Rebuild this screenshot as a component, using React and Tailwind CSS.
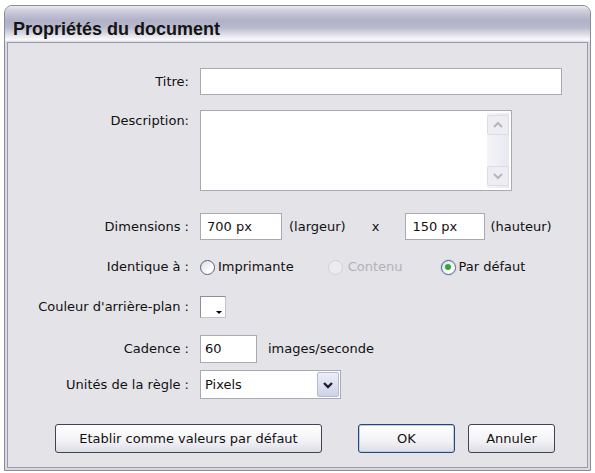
import React from 'react'

function Radio({ checked, disabled }) {
    return (
        <span
            className={`relative flex h-[15px] w-[15px] items-center justify-center rounded-full border ${disabled ? 'border-[#cfcfd6] bg-[#ececf0]' : 'border-[#55627e] bg-[linear-gradient(135deg,#d8d8e2,#ffffff_70%)]'} ${checked ? 'shadow-[0_0_0_1px_#c6d6f0]' : ''}`}
        >
            {checked && <span className="h-[6px] w-[6px] rounded-full bg-[#2fa83a]" />}
        </span>
    )
}

function Chevron({ up, color, w = 2 }) {
    return (
        <svg width="10" height="8" viewBox="0 0 10 8">
            <path d={up ? 'M1 6 L5 2 L9 6' : 'M1 2 L5 6 L9 2'} fill="none" stroke={color} strokeWidth={w} />
        </svg>
    )
}

function Label({ children, top }) {
    return (
        <div className={`w-[182px] shrink-0 pr-[1px] text-right ${top ? 'self-start pt-[1px]' : ''}`}>{children}</div>
    )
}

export default function App() {
    return (
        <div className="h-[473px] w-[595px] overflow-hidden bg-white pl-[4px] pt-[5px] font-['DejaVu_Sans',sans-serif] text-[13px] text-[#111]">
            <div className="flex h-[466px] w-[587px] flex-col overflow-hidden rounded-t-[8px] border border-[#8a8a9a] bg-[#d9d9e1]">
                {/* title bar */}
                <div className="h-[36px] shrink-0 bg-[linear-gradient(to_bottom,#ececf2_0%,#d0d0dc_12%,#b0b0c8_40%,#babacd_60%,#e4e4ec_82%,#fafafc_94%,#d8d8e2_100%)] pl-[8px] pt-[12px]">
                    <div className="font-['Liberation_Sans',Arial,sans-serif] text-[18px] font-bold leading-[22px] text-[#141414]">
                        Propriétés du document
                    </div>
                </div>

                <div className="flex-1 px-[2px] pb-[2px]">
                    <div className="flex h-full flex-col border border-[#9a9aac] bg-[#e3e3e8]">
                        {/* Titre */}
                        <div className="mt-[25px] flex h-[27px] items-center gap-[10px]">
                            <Label>Titre:</Label>
                            <div className="h-[27px] w-[362px] border border-[#a9a9b6] bg-white" />
                        </div>

                        {/* Description */}
                        <div className="mt-[15px] flex h-[81px] gap-[10px]">
                            <Label top>Description:</Label>
                            <div className="flex h-[81px] w-[312px] justify-end border border-[#a9a9b6] bg-white p-[2px]">
                                <div className="flex w-[22px] flex-col justify-between bg-[linear-gradient(to_right,#f4f4f8,#e8e8f0)] py-[2px]">
                                    <div className="flex h-[20px] items-center justify-center rounded-[2px] border border-[#dcdce4] bg-[#eeeef2]">
                                        <Chevron up color="#b4b4c2" />
                                    </div>
                                    <div className="flex h-[20px] items-center justify-center rounded-[2px] border border-[#dcdce4] bg-[#eeeef2]">
                                        <Chevron color="#b4b4c2" />
                                    </div>
                                </div>
                            </div>
                        </div>

                        {/* Dimensions */}
                        <div className="mt-[22px] flex h-[27px] items-center gap-[10px]">
                            <Label>Dimensions :</Label>
                            <div className="flex items-center">
                                <div className="flex h-[27px] w-[82px] items-center border border-[#a9a9b6] bg-white pl-[6px]">700 px</div>
                                <span className="ml-[7px]">(largeur)</span>
                                <span className="ml-[26px]">x</span>
                                <div className="ml-[26px] flex h-[27px] w-[80px] items-center border border-[#a9a9b6] bg-white pl-[6px]">150 px</div>
                                <span className="ml-[5px]">(hauteur)</span>
                            </div>
                        </div>

                        {/* Identique a */}
                        <div className="mt-[17px] flex h-[20px] items-center gap-[10px]">
                            <Label>Identique à :</Label>
                            <div className="flex items-center">
                                <Radio />
                                <span className="ml-[3px]">Imprimante</span>
                                <span className="ml-[34px]"><Radio disabled /></span>
                                <span className="ml-[5px] text-[#b2b2b8]">Contenu</span>
                                <span className="ml-[38px]"><Radio checked /></span>
                                <span className="ml-[3px]">Par défaut</span>
                            </div>
                        </div>

                        {/* Couleur */}
                        <div className="mt-[19px] flex h-[22px] items-center gap-[10px]">
                            <Label>Couleur d'arrière-plan :</Label>
                            <div className="relative h-[22px] w-[26px] border border-t-[#8c8c9c] border-l-[#8c8c9c] border-r-[#c4c4cc] border-b-[#c4c4cc] bg-white">
                                <span className="absolute bottom-[3px] right-[3px] h-0 w-0 border-x-[3px] border-t-[3px] border-x-transparent border-t-black" />
                            </div>
                        </div>

                        {/* Cadence */}
                        <div className="mt-[17px] flex h-[28px] items-center gap-[10px]">
                            <Label>Cadence :</Label>
                            <div className="flex items-center">
                                <div className="flex h-[28px] w-[57px] items-center border border-[#a9a9b6] bg-white pl-[4px]">60</div>
                                <span className="ml-[11px]">images/seconde</span>
                            </div>
                        </div>

                        {/* Unites */}
                        <div className="mt-[7px] flex h-[29px] items-center gap-[10px]">
                            <Label>Unités de la règle :</Label>
                            <div className="flex h-[29px] w-[141px] items-center justify-between border border-[#a9a9b6] bg-white pl-[4px] pr-[1px]">
                                <span>Pixels</span>
                                <div className="flex h-[25px] w-[22px] items-center justify-center rounded-[2px] border border-[#b4bad0] bg-[linear-gradient(to_bottom,#eceef8,#cdd2e6)]">
                                    <Chevron color="#1e1e30" w={2.4} />
                                </div>
                            </div>
                        </div>

                        {/* buttons */}
                        <div className="mt-[25px] flex h-[29px] items-center pl-[47px]">
                            <div className="flex h-[29px] w-[267px] items-center justify-center rounded-[3px] border border-[#3e4456] bg-[linear-gradient(to_bottom,#ffffff,#f2f2f6_60%,#dcdce4)]">
                                Etablir comme valeurs par défaut
                            </div>
                            <div className="ml-[36px] flex h-[29px] w-[97px] items-center justify-center rounded-[3px] border border-[#2e4470] bg-[linear-gradient(to_bottom,#ffffff,#f2f2f6_60%,#dcdce4)] shadow-[inset_0_0_0_1px_#b6cdee]">
                                OK
                            </div>
                            <div className="ml-[13px] flex h-[29px] w-[87px] items-center justify-center rounded-[3px] border border-[#3e4456] bg-[linear-gradient(to_bottom,#ffffff,#f2f2f6_60%,#dcdce4)]">
                                Annuler
                            </div>
                        </div>
                    </div>
                </div>
            </div>
        </div>
    )
}
